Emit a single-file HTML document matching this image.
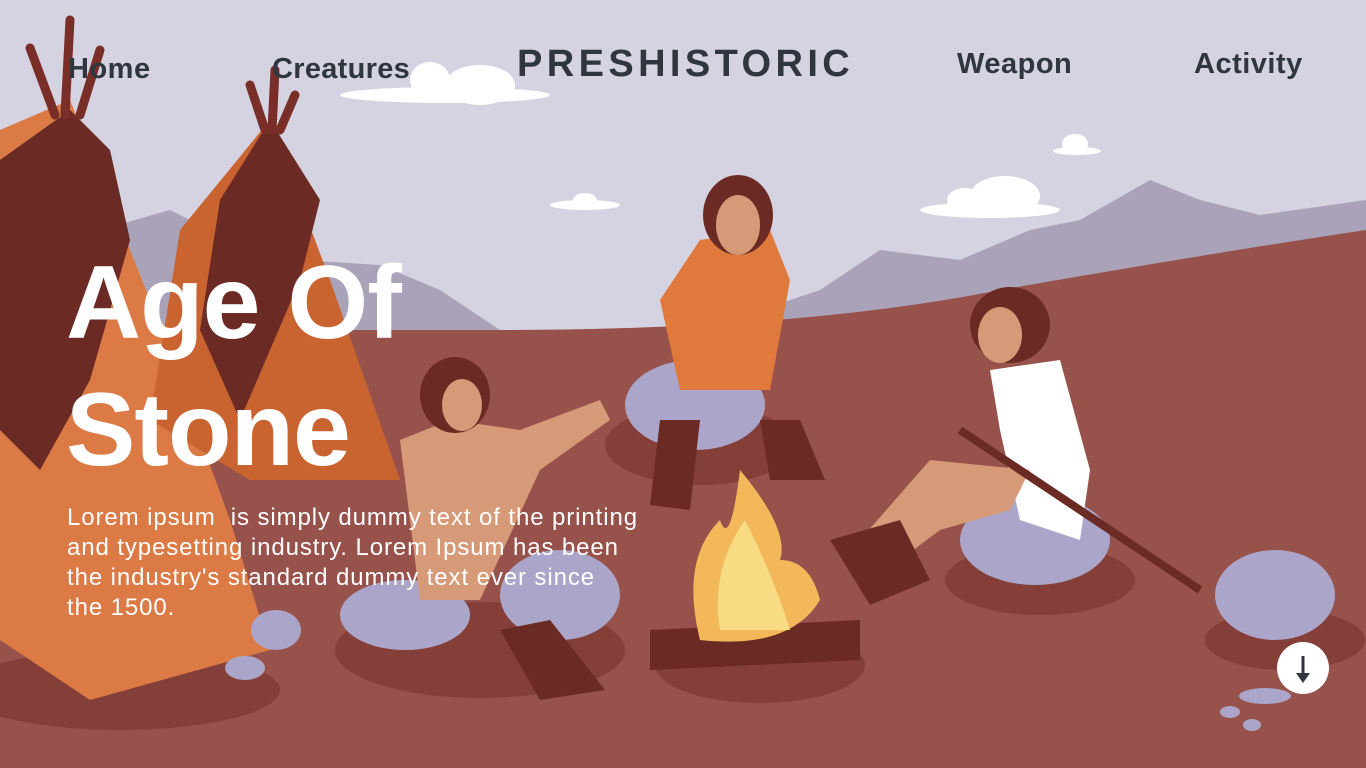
<!DOCTYPE html>
<html><head><meta charset="utf-8"><style>
*{margin:0;padding:0;box-sizing:border-box}
body{width:1366px;height:768px;overflow:hidden;background:#d5d3e1;font-family:"Liberation Sans",sans-serif;position:relative}
svg{position:absolute;left:0;top:0}
.nav{position:absolute;color:#2f3640;font-weight:bold;font-size:29px;letter-spacing:0px}
h1{position:absolute;left:66px;top:240px;color:#fff;font-size:104px;line-height:127px;font-weight:bold;letter-spacing:-1px}
p{position:absolute;left:67px;top:503px;width:700px;white-space:nowrap;color:#fff;font-size:24px;line-height:30px;letter-spacing:0.9px}
.btn{position:absolute;left:1277px;top:642px;width:52px;height:52px;border-radius:50%;background:#fff}
</style></head><body>
<svg width="1366" height="768" viewBox="0 0 1366 768">
<g fill="#fff">
<ellipse cx="445" cy="95" rx="105" ry="8"/><ellipse cx="430" cy="80" rx="20" ry="18"/><ellipse cx="480" cy="85" rx="35" ry="20"/>
<ellipse cx="585" cy="205" rx="35" ry="5"/><ellipse cx="585" cy="200" rx="12" ry="7"/>
<ellipse cx="990" cy="210" rx="70" ry="8"/><ellipse cx="1005" cy="196" rx="35" ry="20"/><ellipse cx="965" cy="200" rx="18" ry="12"/>
<ellipse cx="1077" cy="151" rx="24" ry="4"/><ellipse cx="1075" cy="144" rx="13" ry="10"/>
</g>
<path d="M0 250 L100 230 L170 210 L230 240 L300 260 L380 265 L440 290 L500 330 L0 330Z" fill="#a9a2b9"/>
<path d="M700 330 L820 290 L880 250 L960 260 L1030 230 L1080 220 L1150 180 L1200 200 L1260 215 L1366 200 L1366 330Z" fill="#a9a2b9"/>
<path d="M0 330 L500 330 Q800 330 1000 290 Q1200 255 1366 230 L1366 768 L0 768Z" fill="#97524b"/>
<g fill="#843f39">
<ellipse cx="120" cy="690" rx="160" ry="40"/>
<ellipse cx="480" cy="650" rx="145" ry="48"/>
<ellipse cx="760" cy="665" rx="105" ry="38"/>
<ellipse cx="700" cy="445" rx="95" ry="40"/>
<ellipse cx="1040" cy="580" rx="95" ry="35"/>
<ellipse cx="1285" cy="640" rx="80" ry="30"/>
</g>
<path d="M70 100 L0 130 L0 640 L90 700 L270 650 L230 520 L150 300Z" fill="#db7a45"/>
<path d="M270 120 L180 230 L150 420 L250 480 L400 480 L330 280Z" fill="#c9632f"/>
<path d="M270 120 L220 200 L200 330 L240 420 L300 280 L320 200Z" fill="#6b2a24"/>
<path d="M70 110 L0 160 L0 430 L40 470 L90 380 L130 240 L110 150Z" fill="#6b2a24"/>
<g stroke="#7a2e28" stroke-width="9" stroke-linecap="round">
<line x1="70" y1="20" x2="65" y2="115"/><line x1="30" y1="48" x2="55" y2="115"/><line x1="100" y1="50" x2="80" y2="115"/>
<line x1="275" y1="70" x2="272" y2="130"/><line x1="250" y1="85" x2="265" y2="130"/><line x1="295" y1="95" x2="280" y2="130"/>
</g>
<g fill="#aba6c9">
<ellipse cx="405" cy="615" rx="65" ry="35"/><ellipse cx="560" cy="595" rx="60" ry="45"/>
<ellipse cx="695" cy="405" rx="70" ry="45"/><ellipse cx="1035" cy="540" rx="75" ry="45"/>
<ellipse cx="1275" cy="595" rx="60" ry="45"/><ellipse cx="276" cy="630" rx="25" ry="20"/><ellipse cx="245" cy="668" rx="20" ry="12"/>
<ellipse cx="1265" cy="696" rx="26" ry="8"/><ellipse cx="1230" cy="712" rx="10" ry="6"/><ellipse cx="1252" cy="725" rx="9" ry="6"/>
</g>
<g>
<path d="M660 300 L700 240 L770 230 L790 280 L770 390 L680 390Z" fill="#e07a3c"/>
<ellipse cx="738" cy="215" rx="35" ry="40" fill="#6b2a24"/>
<ellipse cx="738" cy="225" rx="22" ry="30" fill="#d79a78"/>
<path d="M660 420 L700 420 L690 510 L650 505Z M760 420 L800 420 L825 480 L770 480Z" fill="#6b2a24"/>
<path d="M400 440 L450 420 L520 430 L600 400 L610 420 L540 470 L480 600 L420 600Z" fill="#d79a78"/>
<ellipse cx="455" cy="395" rx="35" ry="38" fill="#6b2a24"/><ellipse cx="462" cy="405" rx="20" ry="26" fill="#d79a78"/>
<path d="M500 630 L550 620 L605 690 L540 700Z" fill="#6b2a24"/>
<path d="M990 370 L1060 360 L1090 470 L1080 540 L1020 520 L1000 430Z" fill="#fff"/>
<ellipse cx="1010" cy="325" rx="40" ry="38" fill="#6b2a24"/><ellipse cx="1000" cy="335" rx="22" ry="28" fill="#d79a78"/>
<path d="M930 460 L1030 470 L1010 510 L940 530 L900 560 L860 540Z" fill="#d79a78"/>
<path d="M830 540 L900 520 L930 580 L870 605Z" fill="#6b2a24"/>
<line x1="960" y1="430" x2="1200" y2="590" stroke="#6b2a24" stroke-width="8"/>
</g>
<path d="M650 630 L860 620 L860 660 L650 670Z" fill="#6b2a24"/>
<path d="M700 640 Q680 560 720 520 Q730 550 740 470 Q790 530 780 560 Q810 560 820 600 Q790 650 700 640Z" fill="#f2b85a"/>
<path d="M720 630 Q710 570 745 520 Q775 580 790 630Z" fill="#f8dc84"/>
</svg>
<div class="nav" style="left:68px;top:53px;letter-spacing:0.5px">Home</div>
<div class="nav" style="left:272px;top:53px;letter-spacing:0.3px">Creatures</div>
<div class="nav" style="left:517px;top:43px;font-size:38px;letter-spacing:4.4px">PRESHISTORIC</div>
<div class="nav" style="left:957px;top:48px;letter-spacing:0.5px">Weapon</div>
<div class="nav" style="left:1194px;top:48px;letter-spacing:0.5px">Activity</div>
<h1>Age Of<br>Stone</h1>
<p>Lorem ipsum &nbsp;is simply dummy text of the printing<br>and typesetting industry. Lorem Ipsum has been<br>the industry's standard dummy text ever since<br>the 1500.</p>
<div class="btn"><svg width="52" height="52" viewBox="0 0 52 52"><line x1="26" y1="14" x2="26" y2="36" stroke="#2f3640" stroke-width="3"/><path d="M19 31 L26 41 L33 31Z" fill="#2f3640"/></svg></div>
</body></html>
